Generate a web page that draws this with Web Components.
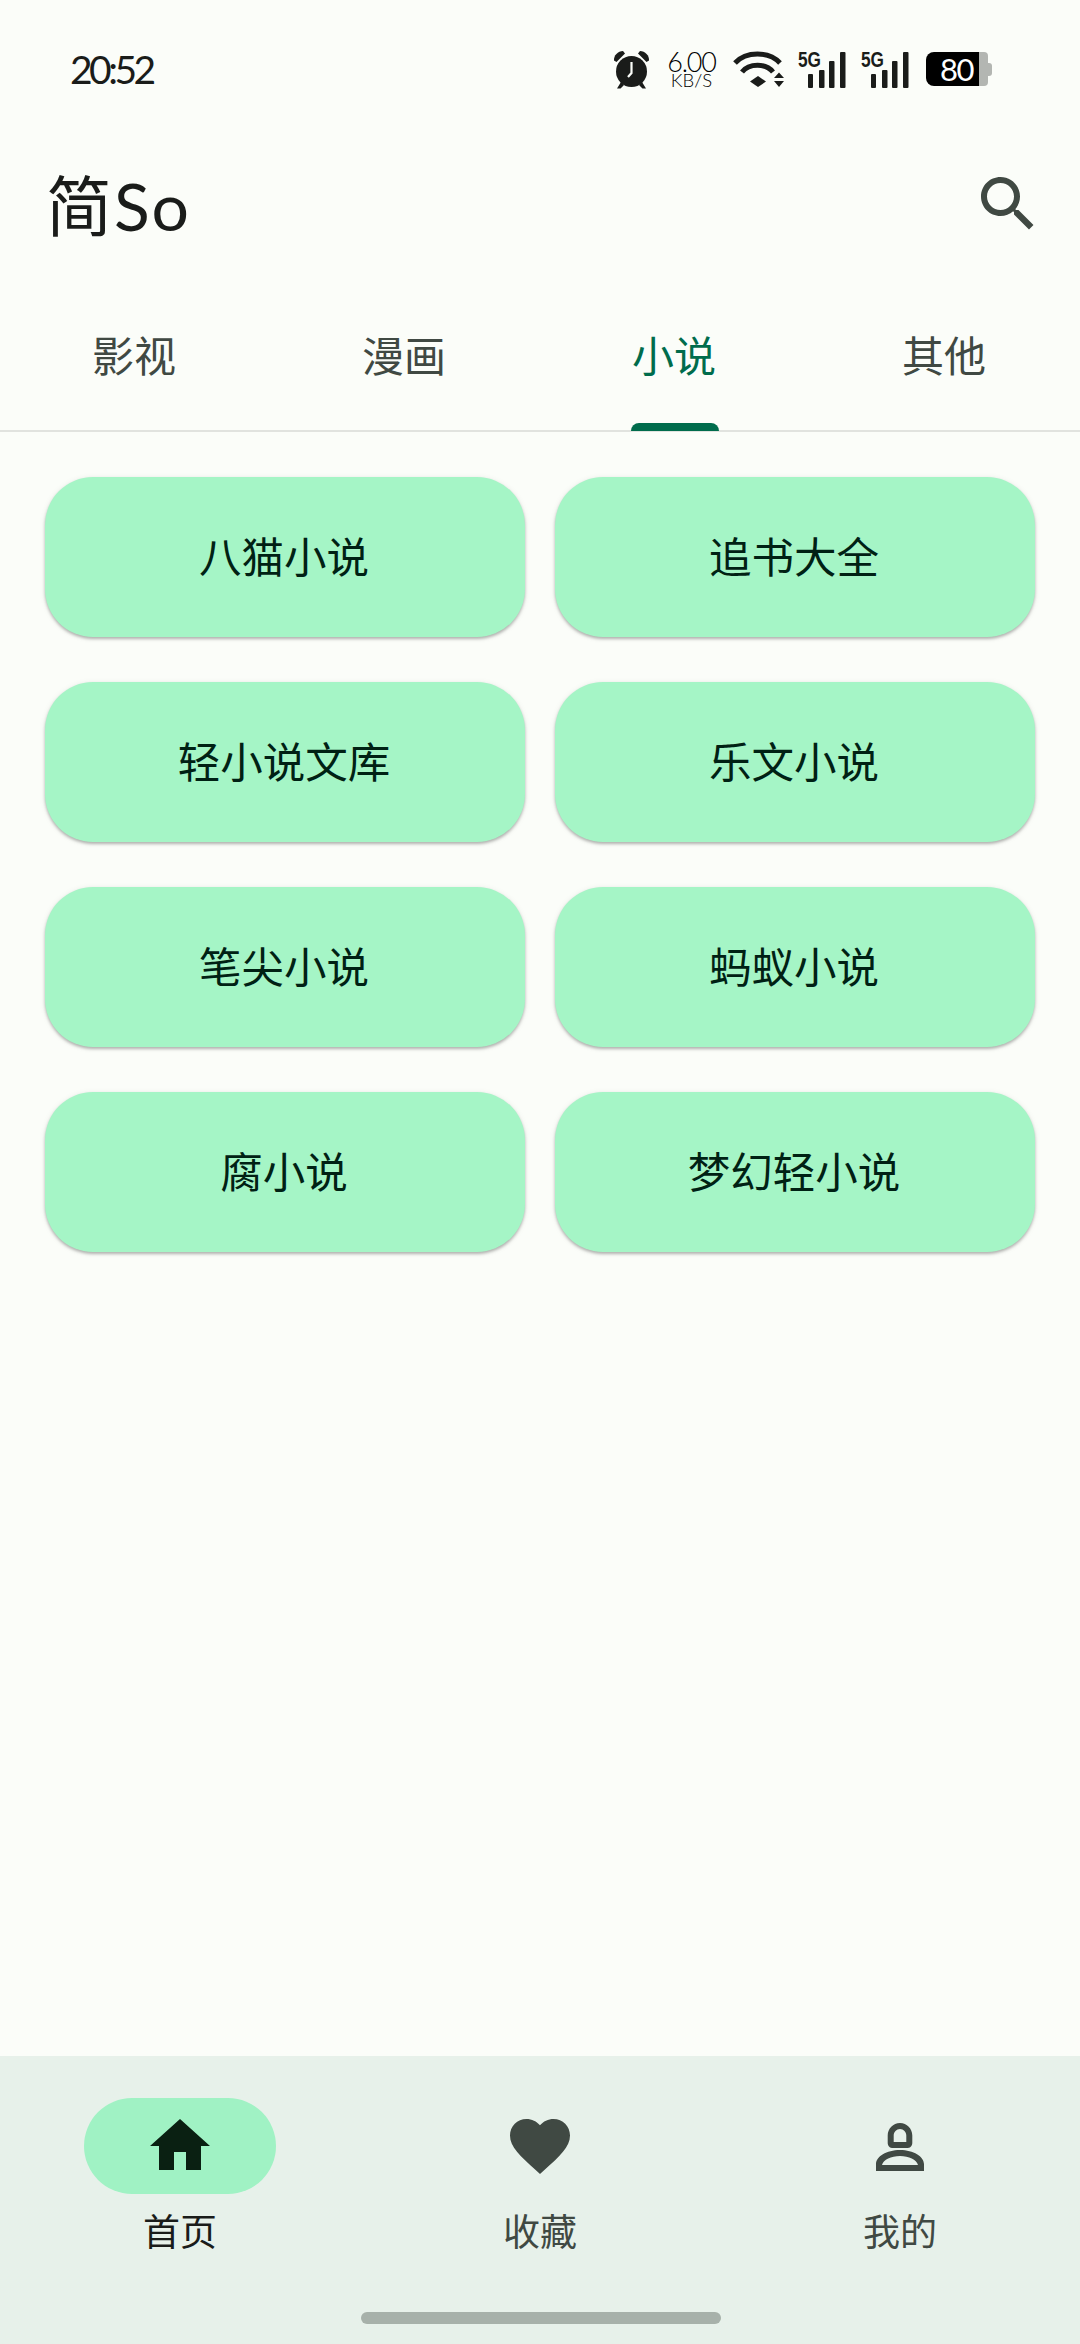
<!DOCTYPE html>
<html lang="zh-CN">
<head>
<meta charset="utf-8">
<title>简So</title>
<style>
    html, body { margin: 0; padding: 0; height: 100%; }
    body {
        background: #fbfdf9;
        font-family: "Noto Sans CJK SC", "Noto Sans", sans-serif;
    }
    app-shell { height: 2344px; }
</style>
</head>
<body>
<app-shell>
    <status-bar slot="status"></status-bar>
    <top-bar slot="top" title="简So"></top-bar>
    <tab-strip slot="tabs">
        <tab-item>影视</tab-item>
        <tab-item>漫画</tab-item>
        <tab-item active>小说</tab-item>
        <tab-item>其他</tab-item>
    </tab-strip>
    <site-grid>
        <site-card>八猫小说</site-card>
        <site-card>追书大全</site-card>
        <site-card>轻小说文库</site-card>
        <site-card>乐文小说</site-card>
        <site-card>笔尖小说</site-card>
        <site-card>蚂蚁小说</site-card>
        <site-card>腐小说</site-card>
        <site-card>梦幻轻小说</site-card>
    </site-grid>
    <bottom-nav slot="nav">
        <nav-item active label="首页" icon="home"></nav-item>
        <nav-item label="收藏" icon="heart"></nav-item>
        <nav-item label="我的" icon="person"></nav-item>
    </bottom-nav>
</app-shell>

<script>
const ICONS = {
    home: '<path d="M10 20v-6h4v6h5v-8h3L12 3 2 12h3v8z"/>',
    heart: '<path d="M12 21.35l-1.45-1.32C5.4 15.36 2 12.28 2 8.5 2 5.42 4.42 3 7.5 3c1.74 0 3.41.81 4.5 2.09C13.09 3.81 14.76 3 16.5 3 19.58 3 22 5.42 22 8.5c0 3.78-3.4 6.86-8.55 11.54L12 21.35z"/>',
    person: '<path fill-rule="evenodd" d="M12 4.300c-2.300 0-4.100 1.900-4.100 4.200v2.400c0 1.200.8 1.800 1.800 1.800h4.600c1 0 1.800-.6 1.800-1.800V8.500c0-2.300-1.800-4.200-4.100-4.200zm0 2c1.200 0 2.100 1 2.100 2.200v2.200H9.900V8.500c0-1.200.9-2.200 2.100-2.200zM4 20.300V18c0-2.500 3.500-4.700 8-4.700s8 2.200 8 4.700v2.300zm2-2h12c-.5-1.800-3-3-6-3s-5.500 1.200-6 3z"/>'
};

const SIGNAL = /*html*/`
    <svg width="48" height="37" viewBox="0 0 48 37" style="overflow: visible">
        <text x="0" y="16" font-family="Liberation Sans, sans-serif" font-weight="700" font-size="22" textLength="23" lengthAdjust="spacingAndGlyphs">5G</text>
        <rect x="10" y="23" width="5" height="14" rx="1"/>
        <rect x="21" y="19" width="5.500" height="18" rx="1"/>
        <rect x="31" y="10" width="5.500" height="27" rx="1"/>
        <rect x="42" y="1" width="5.500" height="36" rx="1"/>
    </svg>
`;

class AppShell extends HTMLElement {
    constructor() {
        super();
        this.attachShadow({ mode: 'open' }).innerHTML = /*html*/`
            <style>
                :host { display: flex; flex-direction: column; width: 1080px; }
                .main { flex: 1; min-height: 0; }
            </style>
            <slot name="status"></slot>
            <slot name="top"></slot>
            <slot name="tabs"></slot>
            <div class="main"><slot></slot></div>
            <slot name="nav"></slot>
        `;
    }
}

class StatusBar extends HTMLElement {
    constructor() {
        super();
        this.attachShadow({ mode: 'open' }).innerHTML = /*html*/`
            <style>
                :host {
                    display: flex;
                    align-items: center;
                    height: 140px;
                    box-sizing: border-box;
                    padding: 0 88px 2px 70px;
                    color: #1a1c1a;
                    font-family: "Lato", "Noto Sans", sans-serif;
                }
                .time { font-size: 39px; font-weight: 400; letter-spacing: -3.500px; margin-right: auto; }
                .icons { display: flex; align-items: center; }
                svg { display: block; fill: currentColor; }
                .alarm { margin-right: 20px; }
                .speed { display: flex; flex-direction: column; align-items: center; width: 43px; margin-right: 20px; color: #000; }
                .speed b { font-weight: 300; font-size: 27px; letter-spacing: -1.200px; height: 22px; line-height: 22px; }
                .speed span { font-weight: 300; font-size: 18.500px; height: 15px; line-height: 15px; white-space: nowrap; }
                .wifi { margin-right: 14px; }
                .sim1 { margin-right: 15px; }
                .sim2 { margin-right: 17px; }
                .battery { display: flex; align-items: center; height: 34px; }
                .battery .level {
                    width: 53px; height: 34px; background: #000; color: #fff;
                    border-radius: 8px 0 0 8px; font-size: 31px; font-weight: 400;
                    display: flex; align-items: center; justify-content: flex-end;
                    padding-right: 6px; box-sizing: border-box; letter-spacing: -1.500px;
                }
                .battery .rest { width: 9px; height: 34px; background: #b3b6b2; border-radius: 0 4px 4px 0; }
                .battery .cap { width: 4px; height: 13px; background: #b3b6b2; border-radius: 0 3px 3px 0; }
            </style>
            <span class="time">20:52</span>
            <div class="icons">
                <svg class="alarm" width="37" height="39" viewBox="0 0 37 39">
                    <circle cx="18.500" cy="21.500" r="15.500"/>
                    <path d="M1 10.500C.5 5.500 5 1 10 1l2 2.500L3.500 12z"/>
                    <path d="M36 10.500C36.500 5.500 32 1 27 1l-2 2.500L33.500 12z"/>
                    <path d="M8 32l-4 6.500h3.500L11 35zM29 32l4 6.500h-3.500L26 35z"/>
                    <path d="M18.500 12v11l-3.500 4" fill="none" stroke="#fbfdf9" stroke-width="2.200"/>
                </svg>
                <div class="speed"><b>6.00</b><span>KB/S</span></div>
                <svg class="wifi" width="51" height="37" viewBox="0 0 51 37">
                    <path d="M2 12C13 0 36 0 47 12" fill="none" stroke="currentColor" stroke-width="5"/>
                    <path d="M9 21C16 12 33 12 40 21" fill="none" stroke="currentColor" stroke-width="5"/>
                    <path d="M25 25l8 5.500-8 5.500-8-5.500z"/>
                    <path d="M41 27l5-5.500 5 5.500zM41 30h10l-5 6z"/>
                </svg>
                <div class="sim1">${SIGNAL}</div>
                <div class="sim2">${SIGNAL}</div>
                <div class="battery">
                    <div class="level">80</div>
                    <div class="rest"></div>
                    <div class="cap"></div>
                </div>
            </div>
        `;
    }
}

class TopBar extends HTMLElement {
    constructor() {
        super();
        this.attachShadow({ mode: 'open' }).innerHTML = /*html*/`
            <style>
                :host {
                    display: flex;
                    align-items: center;
                    justify-content: space-between;
                    height: 128px;
                    padding: 0 36px 0 46px;
                    box-sizing: border-box;
                    color: #1a1c1a;
                }
                h1 {
                    margin: 3px 0 0;
                    font-family: "Lato", "Noto Sans CJK SC", sans-serif;
                    font-size: 66px;
                    font-weight: 400;
                    line-height: 1;
                    letter-spacing: 2px;
                }
                svg { display: block; fill: #404943; }
            </style>
            <h1>${this.getAttribute('title')}</h1>
            <svg width="72" height="72" viewBox="0 0 24 24"><path d="M15.500 14h-.79l-.28-.27C15.410 12.590 16 11.110 16 9.500 16 5.910 13.090 3 9.500 3S3 5.910 3 9.500 5.910 16 9.500 16c1.610 0 3.090-.59 4.230-1.570l.27.28v.79l5 4.990L20.490 19l-4.990-5zm-6 0C7.010 14 5 11.990 5 9.500S7.010 5 9.500 5 14 7.010 14 9.500 11.990 14 9.500 14z"/></svg>
        `;
    }
}

class TabStrip extends HTMLElement {
    constructor() {
        super();
        this.attachShadow({ mode: 'open' }).innerHTML = /*html*/`
            <style>
                :host {
                    display: grid;
                    grid-template-columns: repeat(4, 1fr);
                    height: 164px;
                    box-sizing: border-box;
                    border-bottom: 2px solid #e1e3df;
                }
            </style>
            <slot></slot>
        `;
    }
}

class TabItem extends HTMLElement {
    constructor() {
        super();
        this.attachShadow({ mode: 'open' }).innerHTML = /*html*/`
            <style>
                :host {
                    display: flex;
                    flex-direction: column;
                    align-items: center;
                    justify-content: flex-end;
                    color: #404943;
                    font-size: 42px;
                    line-height: 60px;
                    position: relative;
                }
                :host([active]) { color: #006c4c; }
                .label { margin: 0 2px 46px 0; }
                :host([active]) .line {
                    position: absolute; bottom: -1px;
                    width: 88px; height: 8px;
                    background: #006c4c;
                    border-radius: 8px 8px 0 0;
                }
            </style>
            <span class="label"><slot></slot></span>
            <span class="line"></span>
        `;
    }
}

class SiteGrid extends HTMLElement {
    constructor() {
        super();
        this.attachShadow({ mode: 'open' }).innerHTML = /*html*/`
            <style>
                :host {
                    display: grid;
                    grid-template-columns: repeat(2, 480px);
                    grid-auto-rows: 160px;
                    gap: 45px 30px;
                    padding: 45px 45px 0;
                }
            </style>
            <slot></slot>
        `;
    }
}

class SiteCard extends HTMLElement {
    constructor() {
        super();
        this.attachShadow({ mode: 'open' }).innerHTML = /*html*/`
            <style>
                :host {
                    display: flex;
                    align-items: center;
                    justify-content: center;
                    background: #a5f5c6;
                    color: #002114;
                    border-radius: 48px;
                    font-size: 42.500px;
                    padding: 0 2px 6px 0;
                    box-sizing: border-box;
                    box-shadow: 0 2px 3px rgba(0,0,0,.26), 0 1px 6px rgba(0,0,0,.08);
                }
            </style>
            <slot></slot>
        `;
    }
}

class BottomNav extends HTMLElement {
    constructor() {
        super();
        this.attachShadow({ mode: 'open' }).innerHTML = /*html*/`
            <style>
                :host {
                    display: block;
                    height: 288px;
                    box-sizing: border-box;
                    background: #e7f1ea;
                    padding-top: 42px;
                    position: relative;
                }
                .items { display: grid; grid-template-columns: repeat(3, 360px); }
                .handle {
                    position: absolute; left: 361px; bottom: 20px;
                    width: 360px; height: 12px;
                    border-radius: 6px;
                    background: #a7b1aa;
                }
            </style>
            <div class="items"><slot></slot></div>
            <div class="handle"></div>
        `;
    }
}

class NavItem extends HTMLElement {
    constructor() {
        super();
        const icon = ICONS[this.getAttribute('icon')];
        this.attachShadow({ mode: 'open' }).innerHTML = /*html*/`
            <style>
                :host {
                    display: flex;
                    flex-direction: column;
                    align-items: center;
                    color: #404943;
                    font-size: 37px;
                    line-height: 50px;
                }
                :host([active]) { color: #1a1c1a; }
                .pill {
                    width: 192px; height: 96px;
                    border-radius: 48px;
                    display: flex; align-items: center; justify-content: center;
                    margin-bottom: 11px;
                }
                :host([active]) .pill { background: #a0f2c4; }
                svg { display: block; fill: #404943; }
                :host([active]) svg { fill: #0a2012; }
            </style>
            <div class="pill"><svg width="72" height="72" viewBox="0 0 24 24">${icon}</svg></div>
            <span>${this.getAttribute('label')}</span>
        `;
    }
}

customElements.define('app-shell', AppShell);
customElements.define('status-bar', StatusBar);
customElements.define('top-bar', TopBar);
customElements.define('tab-strip', TabStrip);
customElements.define('tab-item', TabItem);
customElements.define('site-grid', SiteGrid);
customElements.define('site-card', SiteCard);
customElements.define('bottom-nav', BottomNav);
customElements.define('nav-item', NavItem);
</script>
</body>
</html>
